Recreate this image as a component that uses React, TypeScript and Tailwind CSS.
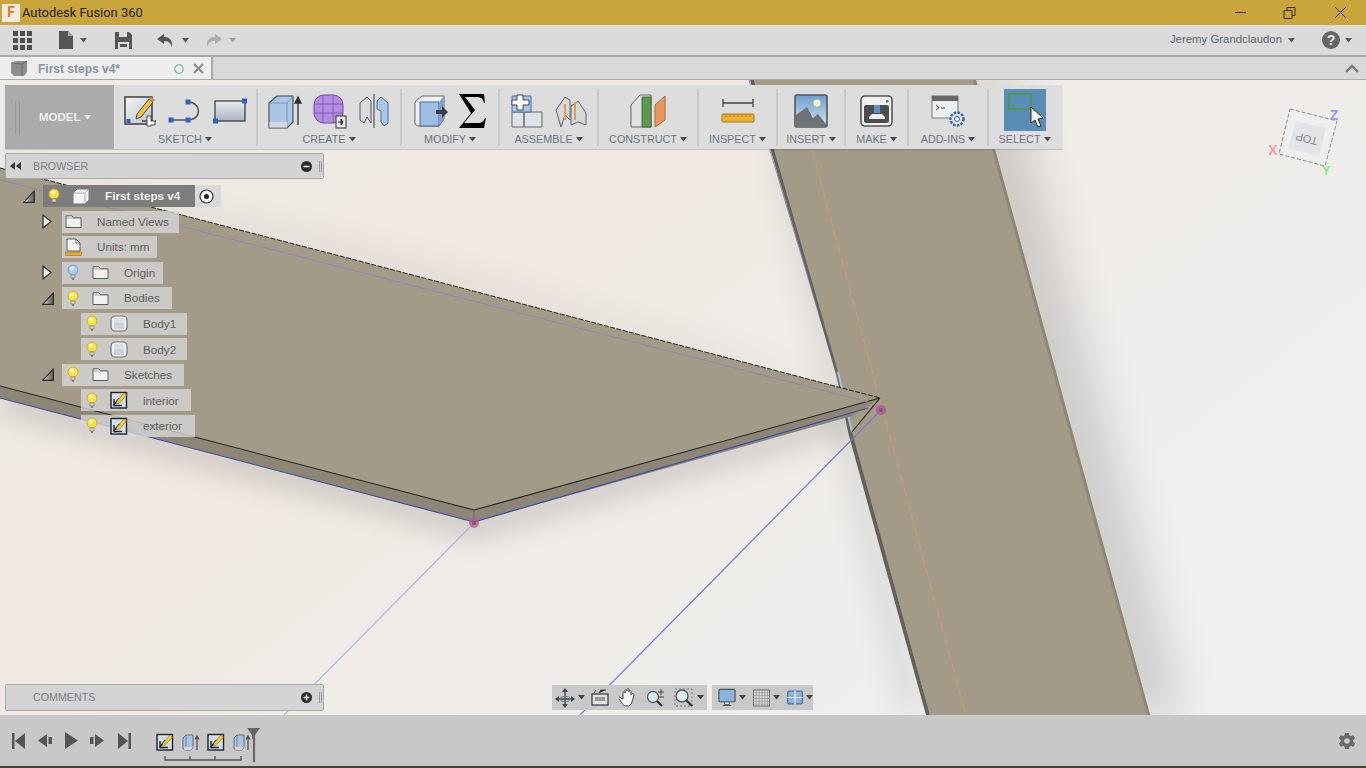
import React from 'react';
import { IoMdSettings } from 'react-icons/io';

const Caret = ({ color = '#555' }: { color?: string }) => (
  <svg width="7" height="5" viewBox="0 0 7 5" className="shrink-0"><path d="M0 0h7L3.5 4.5z" fill={color} /></svg>
);

const Bulb = ({ blue = false }: { blue?: boolean }) => (
  <svg width="12" height="17" viewBox="0 0 12 17">
    <circle cx="6" cy="6" r="5" fill={blue ? '#a9cdf2' : '#f6e24a'} stroke={blue ? '#6f9ccc' : '#cfae2f'} />
    <circle cx="5" cy="4.6" r="2" fill="#fff" opacity="0.65" />
    <path d="M4 11h4v3H4z" fill={blue ? '#cfdce8' : '#e6dfb5'} stroke="#777" strokeWidth="0.7" />
    <path d="M5 15h2" stroke="#666" strokeWidth="1.4" />
  </svg>
);

const Folder = () => (
  <svg width="17" height="15" viewBox="0 0 17 15">
    <path d="M1 13.5V1.8h6l1.4 2H16v9.7z" fill="#f2f2f2" stroke="#5c5c5c" strokeWidth="1" strokeLinejoin="round" />
    <path d="M1 4h15" stroke="#8a8a8a" strokeWidth="0.7" />
  </svg>
);

const BodyIcon = () => (
  <svg width="18" height="17" viewBox="0 0 18 17">
    <rect x="1" y="1" width="16" height="15" rx="4" fill="#f0f0f0" stroke="#6f7277" strokeWidth="1.2" />
    <rect x="4" y="3" width="10" height="11" rx="1" fill="#dcdfe2" />
    <path d="M4 8h10v6H4z" fill="#c7cacd" opacity="0.7" />
  </svg>
);

const SketchIcon = () => (
  <svg width="18" height="18" viewBox="0 0 18 18">
    <rect x="1" y="1.5" width="15.5" height="15.5" fill="#cfe0ef" stroke="#222" strokeWidth="1.4" />
    <path d="M4 14.5V8M4 14.5h8" stroke="#222" strokeWidth="1.4" />
    <path d="M4.5 14l-.8 0L9.5 7" stroke="#222" strokeWidth="1.2" />
    <path d="M7 10l7-8 2.5 2-7 8-3 1z" fill="#f5c92f" stroke="#7a5a10" strokeWidth="0.5" />
    <path d="M3 15.5h4v1H3z" fill="#4f8fd0" />
  </svg>
);

const MiniExtrude = () => (
  <svg width="18" height="18" viewBox="0 0 18 18">
    <path d="M1 5l3-3h7v12l-2 3H2.5L1 15.5z" fill="#a9c4e4" stroke="#5f6670" strokeWidth="0.9" />
    <path d="M4 2v12h7M4 14l-3 1.5" stroke="#5f6670" strokeWidth="0.7" fill="none" />
    <path d="M1.5 14l2.5-.5h7L9 17H2.5z" fill="#d5d8dc" />
    <path d="M15 17V4M13 6.5L15 3l2 3.5" stroke="#4d4d4d" strokeWidth="1.2" fill="none" />
  </svg>
);

const CubeTiny = () => (
  <svg width="18" height="17" viewBox="0 0 18 17">
    <path d="M1 5l4-4h12v11l-4 4H1z" fill="#f4f4f4" stroke="#777" strokeWidth="1" strokeLinejoin="round" />
    <path d="M1 5h12v11M13 5l4-4" stroke="#999" strokeWidth="0.8" fill="none" />
  </svg>
);

const UnitsIcon = () => (
  <svg width="17" height="18" viewBox="0 0 17 18">
    <path d="M2 13V1h9l4 4v8z" fill="#f3f3f3" stroke="#5e5e5e" />
    <path d="M11 1v4h4" fill="none" stroke="#5e5e5e" />
    <rect x="0.5" y="14" width="16" height="3.4" fill="#e9a92b" stroke="#9a6e12" strokeWidth="0.6" />
  </svg>
);

const Tri = () => (
  <svg width="12" height="13" viewBox="0 0 12 13">
    <defs><linearGradient id="tg" x1="1" y1="0" x2="0" y2="0"><stop offset="0" stopColor="#555" /><stop offset="1" stopColor="#ddd" /></linearGradient></defs>
    <path d="M11.4.8v11.6H.6z" fill="url(#tg)" stroke="#2c2c2c" strokeWidth="1.1" strokeLinejoin="round" />
  </svg>
);

const Play = () => (
  <svg width="10" height="15" viewBox="0 0 10 15">
    <path d="M1 1l8 6.5L1 14z" fill="#eeeeee" stroke="#333" strokeWidth="1.3" strokeLinejoin="round" />
  </svg>
);

type RowProps = {
  offset: string;
  pill: string;
  arrow?: 'open' | 'closed';
  bulb?: boolean;
  blue?: boolean;
  icon: React.ReactNode;
  label: string;
};

const Row = ({ offset, pill, arrow, bulb, blue, icon, label }: RowProps) => (
  <div className={`flex h-[22px] items-center ${offset}`}>
    <div className="flex w-[22px] shrink-0 pl-[2px]">
      {arrow === 'open' && <Tri />}
      {arrow === 'closed' && <Play />}
    </div>
    <div className={`flex h-[22px] items-center bg-[#d6d6d6]/80 text-[11.7px] text-[#5d5d5d] ${pill}`}>
      {bulb && (
        <span className="ml-[5px] mr-[12px] flex w-[12px] justify-center">
          <Bulb blue={blue} />
        </span>
      )}
      <span className={`flex w-[18px] justify-center ${bulb ? 'mr-[15px]' : 'ml-[2px] mr-[15px]'}`}>{icon}</span>
      <span className="whitespace-nowrap">{label}</span>
    </div>
  </div>
);

const Group = ({ cls, label, children }: { cls: string; label: string; children: React.ReactNode }) => (
  <div className={`relative flex h-full shrink-0 flex-col items-center border-r-2 border-[#c9c9c9] ${cls}`}>
    <div className="flex h-[45px] items-center justify-center gap-[11px]">{children}</div>
    <div className="flex items-center gap-[3px] text-[10.8px] leading-[14px] text-[#6c7480]">
      {label}
      <Caret color="#4d4d4d" />
    </div>
  </div>
);

const Scene = () => (
  <svg className="absolute inset-0 h-full w-full" viewBox="0 80 1366 635" preserveAspectRatio="none">
    <defs>
      <linearGradient id="bg" x1="0" y1="0" x2="1" y2="0.6">
        <stop offset="0" stopColor="#efebe6" />
        <stop offset="0.4" stopColor="#f0e9e2" />
        <stop offset="0.75" stopColor="#efedea" />
        <stop offset="1" stopColor="#f0f0ef" />
      </linearGradient>
      <filter id="soft" x="-50%" y="-30%" width="200%" height="160%"><feGaussianBlur stdDeviation="24" /></filter>
      <filter id="soft2" x="-30%" y="-30%" width="160%" height="160%"><feGaussianBlur stdDeviation="14" /></filter>
    </defs>
    <rect x="0" y="80" width="1366" height="635" fill="url(#bg)" />
    <path d="M950 80L1125 715H1180L1005 80z" fill="#000" opacity="0.17" filter="url(#soft)" />
    <path d="M800 150L925 715H900L770 150z" fill="#000" opacity="0.08" filter="url(#soft2)" />
    <path d="M0 380L474 505 860 400 860 430 474 540 0 415z" fill="#000" opacity="0.13" filter="url(#soft2)" />
    <path d="M0 175L340 260 860 395 700 335 340 235 0 155z" fill="#000" opacity="0.05" filter="url(#soft2)" />

    <path d="M754 80H976L1150 715H930z" fill="#a39b87" />
    <path d="M754 80L838 372 852 432 930 715H926L848 432 836 372 750 80z" fill="#64615b" />
    <path d="M976 80L1150 715H1147L973 80z" fill="#8e8776" />
    <path d="M812 150L965 712" stroke="#d4976a" strokeWidth="1.1" strokeDasharray="9 5" />
    <path d="M749 80L836 372" stroke="#4550a0" strokeWidth="0.8" opacity="0.7" />

    <path d="M838 372L852 432" stroke="#a9c3e6" strokeWidth="2" />
    <path d="M474 523L284 715" stroke="#b3b8dc" strokeWidth="1.2" />
    <path d="M881 410L580 715" stroke="#7f78cc" strokeWidth="1.2" />

    <path d="M0 398V386L474 510 880 398 852 416 474 522z" fill="#8d8677" />
    <path d="M0 168L340 256 880 398 474 510 0 386z" fill="#a39b87" />
    <path d="M0 168L340 256 880 398" stroke="#26241f" strokeWidth="1" strokeDasharray="5 1.5" fill="none" />
    <path d="M0 386L474 510 880 398" stroke="#26241f" strokeWidth="1.1" fill="none" />
    <path d="M0 398L474 522 868 408" stroke="#3d4aa8" strokeWidth="1.1" fill="none" />
    <path d="M474 510V522" stroke="#6b675e" strokeWidth="1" />
    <path d="M0 180L340 267 868 402 881 410" stroke="#8f82b4" strokeWidth="1" fill="none" />
    <path d="M880 398L852 432" stroke="#1f1f1f" strokeWidth="1.1" />

    <circle cx="881" cy="410" r="5" fill="#b4558c" opacity="0.75" />
    <circle cx="881" cy="410" r="2" fill="#7f4f8c" />
    <circle cx="474" cy="523" r="5" fill="#b4558c" opacity="0.75" />
    <circle cx="474" cy="523" r="2" fill="#7f4f8c" />

    <path d="M1290 109L1337 121 1325 166 1279 154z" fill="#efefef" stroke="#8f8f8f" strokeWidth="1" strokeDasharray="4 2" />
    <path d="M1296 121L1326 128 1319 156 1288 149z" fill="#e3e4e7" />
    <text x="1307" y="138" transform="rotate(195 1307 138)" textAnchor="middle" dominantBaseline="middle" fontFamily="Liberation Sans" fontSize="11" fill="#8a8a8a">TOP</text>
    <text x="1334" y="120" textAnchor="middle" fontFamily="Liberation Sans" fontSize="14" fontWeight="bold" fill="#9296ff">Z</text>
    <text x="1273" y="155" textAnchor="middle" fontFamily="Liberation Sans" fontSize="14" fontWeight="bold" fill="#ff9a9a">X</text>
    <text x="1326" y="175" textAnchor="middle" fontFamily="Liberation Sans" fontSize="13" fontWeight="bold" fill="#7df07d">Y</text>
  </svg>
);

const QuickBar = () => (
  <div className="flex h-[32px] shrink-0 items-center border-b-2 border-[#a9a9a9] bg-[#dbdbdb]">
    <svg width="19" height="19" viewBox="0 0 19 19" className="ml-[13px]" fill="#4f4f4f">
      <path d="M0 0h5v5H0zM7 0h5v5H7zM14 0h5v5h-5zM0 7h5v5H0zM7 7h5v5H7zM14 7h5v5h-5zM0 14h5v5H0zM7 14h5v5H7zM14 14h5v5h-5z" />
    </svg>
    <svg width="15" height="18" viewBox="0 0 15 18" className="ml-[27px]">
      <path d="M0 0h9l5 5v13H0z" fill="#555" />
      <path d="M9 0l5 5H9z" fill="#aaa" />
    </svg>
    <span className="ml-[6px]"><Caret /></span>
    <svg width="17" height="17" viewBox="0 0 17 17" className="ml-[28px]">
      <path d="M0 0h14l3 3v14H0z" fill="#555" />
      <path d="M4 0h8v5H4z" fill="#dcdcdc" />
      <path d="M3 10h11v7H3z" fill="#dcdcdc" />
      <path d="M5 12h7v3H5z" fill="#555" />
    </svg>
    <svg width="18" height="13" viewBox="0 0 18 13" className="ml-[25px]">
      <path d="M7 0L0 5l7 5V7c4 0 6 1 8 6 1-7-3-10-8-10z" fill="#555" />
    </svg>
    <span className="ml-[7px]"><Caret /></span>
    <svg width="18" height="13" viewBox="0 0 18 13" className="ml-[15px]">
      <path d="M11 0l7 5-7 5V7C7 7 5 8 3 13 2 6 6 3 11 3z" fill="#adadad" />
    </svg>
    <span className="ml-[7px]"><Caret color="#a0a0a0" /></span>
    <div className="ml-auto flex items-center text-[11.4px] text-[#5f6670]">
      <span>Jeremy Grandclaudon</span>
      <span className="ml-[6px]"><Caret /></span>
      <span className="ml-[27px] flex h-[18px] w-[18px] items-center justify-center rounded-full bg-[#666] text-[14px] font-bold text-[#e6e6e6]">?</span>
      <span className="ml-[5px] mr-[14px]"><Caret /></span>
    </div>
  </div>
);

const Toolbar = () => (
  <div className="absolute left-[5px] top-[5px] flex h-[64px] w-[1057px] bg-[#dddddd] pb-[3px] pt-[4px] shadow-[0_1px_1px_rgba(0,0,0,0.15)]">
    <div className="relative -mt-[4px] -mb-[3px] flex w-[109px] shrink-0 items-center bg-[#ababab] pl-[10px] pt-[2px]">
      <span className="h-[34px] w-[5px] border-x border-[#9a9a9a]" />
      <span className="ml-[19px] text-[11.5px] font-bold text-[#efefef]">MODEL</span>
      <span className="ml-[3px] -mt-[2px]"><Caret color="#efefef" /></span>
    </div>

    <Group cls="w-[144px]" label="SKETCH">
      <svg width="34" height="34" viewBox="0 0 34 34">
        <defs><linearGradient id="pg" x1="0" y1="0" x2="1" y2="1"><stop offset="0" stopColor="#f4f4f4" /><stop offset="1" stopColor="#b9c3d3" /></linearGradient></defs>
        <rect x="2" y="3" width="27" height="27" fill="url(#pg)" stroke="#333" strokeWidth="1.4" />
        <rect x="3.5" y="25" width="4" height="4" fill="#2f62c7" />
        <path d="M14 20L26 5l4 3-12 15-5 2z" fill="#f3c43a" stroke="#4d4d4d" strokeWidth="1" />
        <path d="M26 5l2-2 4 3-2 2z" fill="#d98a5d" />
        <path d="M22 29h5v-5h4v5h5-1v4h-4v1h-4v-5h-5z" fill="#fff" stroke="#444" strokeWidth="1" transform="translate(-3 -2)" />
      </svg>
      <svg width="34" height="34" viewBox="0 0 34 34">
        <path d="M3 26h17M20 26c14 0 14-18 0-18" fill="none" stroke="#555" strokeWidth="1.6" />
        <rect x="0.5" y="23.5" width="5" height="5" fill="#2f62c7" />
        <rect x="17.5" y="23.5" width="5" height="5" fill="#2f62c7" />
        <rect x="17.5" y="5.5" width="5" height="5" fill="#2f62c7" />
      </svg>
      <svg width="34" height="34" viewBox="0 0 34 34">
        <defs><linearGradient id="rg" x1="0" y1="0" x2="0" y2="1"><stop offset="0" stopColor="#eceef1" /><stop offset="1" stopColor="#aab3c2" /></linearGradient></defs>
        <rect x="2" y="7" width="30" height="20" fill="url(#rg)" stroke="#333" strokeWidth="1.2" />
        <rect x="0" y="24.5" width="5" height="5" fill="#2f62c7" />
        <rect x="29" y="4.5" width="5" height="5" fill="#2f62c7" />
      </svg>
    </Group>

    <Group cls="w-[144px]" label="CREATE">
      <svg width="34" height="36" viewBox="0 0 34 36">
        <path d="M1 10l8-7h16v26l-6 6H1z" fill="#a9c6e8" stroke="#444" strokeWidth="1.1" strokeLinejoin="round" />
        <path d="M1 10h18v25M19 10l6-7" fill="none" stroke="#7b8a9c" strokeWidth="0.8" />
        <path d="M1.5 29h17.5v5.500H1.500z" fill="#d5d8dc" />
        <path d="M30 32V6M27 10l3-6 3 6z" stroke="#333" strokeWidth="1.3" fill="#333" />
      </svg>
      <svg width="34" height="36" viewBox="0 0 34 36">
        <rect x="1" y="2" width="29" height="28" rx="10" fill="#b58be0" stroke="#6d4aa0" />
        <path d="M1 11h29M1 20h29M10 2v28M20 2v28" stroke="#7d55b4" strokeWidth="0.9" />
        <rect x="23" y="23" width="10" height="12" fill="#e8e8e8" stroke="#333" />
        <path d="M25 29h4M28 26l2 3-2 3z" stroke="#333" fill="#333" strokeWidth="1" />
      </svg>
      <svg width="32" height="34" viewBox="0 0 32 34">
        <path d="M2 9l7-6 4 4v22l-4-6-3 6-4-3z" fill="#d9dce0" stroke="#555" />
        <path d="M30 9l-7-6-4 4v8l4 2v11l3 4 4-3z" fill="#a9c6e8" stroke="#4b6c94" />
        <path d="M16 0v34" stroke="#555" strokeWidth="1.2" />
      </svg>
    </Group>

    <Group cls="w-[98px]" label="MODIFY">
      <svg width="34" height="34" viewBox="0 0 34 34">
        <path d="M1 8l7-6h22v23l-5 7H4L1 30z" fill="#f0f1f2" stroke="#666" />
        <path d="M6 8h19v24H6z" fill="#9dbde3" stroke="#4b6c94" />
        <path d="M25 8l5-6v23l-5 7z" fill="#7fa3cf" />
        <path d="M22 16h6v-4l6 6-6 6v-4h-6z" fill="#3d3d3d" />
      </svg>
      <svg width="27" height="34" viewBox="0 0 27 34">
        <path d="M0 0h25l1 9h-1c-1-4-3-6-7-6H6l10 13L5 29h14c4 0 6-2 7-5h1l-2 10H0l12-15z" fill="#000" />
      </svg>
    </Group>

    <Group cls="w-[99px]" label="ASSEMBLE">
      <svg width="34" height="34" viewBox="0 0 34 34">
        <path d="M2 18h12v15H2zM14 18h18v15H14z" fill="#dfe2e6" stroke="#666" />
        <path d="M2 2h19v16H2z" fill="#a9c6e8" stroke="#4b6c94" />
        <path d="M6 0h6v5h6v5h-6v5H6v-5H1V5h5z" fill="#fff" stroke="#444" transform="translate(1 1)" />
      </svg>
      <svg width="32" height="34" viewBox="0 0 32 34">
        <path d="M1 16L10 3l5 3v20l-5-5-4 12z" fill="#d5d8dc" stroke="#666" />
        <path d="M16 12l7-5 8 12v12l-8-3-7 3z" fill="#d5d8dc" stroke="#666" />
        <path d="M10 10v16M20 8v18" stroke="#e89a4a" strokeWidth="2" />
      </svg>
    </Group>

    <Group cls="w-[100px]" label="CONSTRUCT">
      <svg width="36" height="34" viewBox="0 0 36 34">
        <path d="M1 11L10 1h11v32H1z" fill="#dfe2e6" stroke="#666" />
        <path d="M12 3h9v30h-9z" fill="#5c9a4f" stroke="#3f6f36" />
        <path d="M25 11l10-9v24l-10 7z" fill="#e8985c" stroke="#a86a3a" />
      </svg>
    </Group>

    <Group cls="w-[79px]" label="INSPECT">
      <svg width="34" height="34" viewBox="0 0 34 34">
        <path d="M2 9h30M2 5v8M32 5v8" stroke="#444" strokeWidth="1.3" />
        <rect x="1" y="20" width="32" height="8" rx="1" fill="#eeb02f" stroke="#a87a18" />
        <path d="M5 20v3M9 20v3M13 20v3M17 20v3M21 20v3M25 20v3M29 20v3" stroke="#a87a18" />
      </svg>
    </Group>

    <Group cls="w-[68px]" label="INSERT">
      <svg width="34" height="34" viewBox="0 0 34 34">
        <defs><linearGradient id="sky" x1="0" y1="0" x2="0" y2="1"><stop offset="0" stopColor="#6d9ed0" /><stop offset="1" stopColor="#d4e4ef" /></linearGradient></defs>
        <rect x="1" y="1" width="32" height="32" rx="2" fill="url(#sky)" stroke="#555" strokeWidth="1.6" />
        <circle cx="23" cy="9" r="3.5" fill="#fdf4b8" />
        <path d="M2 32V21l11-8 10 19zM15 32l5-9 4-3 8 10v2z" fill="#6e7377" />
      </svg>
    </Group>

    <Group cls="w-[63px]" label="MAKE">
      <svg width="33" height="32" viewBox="0 0 33 32">
        <rect x="1" y="1" width="31" height="30" rx="4" fill="#f0f0f0" stroke="#555" strokeWidth="1.6" />
        <rect x="4" y="10" width="25" height="18" rx="2" fill="#4a4d50" />
        <path d="M14 10h6v8h-6z" fill="#5a8fc9" />
        <path d="M9 22l3-3h10l3 3v2H9z" fill="#eee" />
        <rect x="26" y="5" width="2.500" height="2.500" fill="#2f9a3c" />
      </svg>
    </Group>

    <Group cls="w-[80px]" label="ADD-INS">
      <svg width="34" height="32" viewBox="0 0 34 32">
        <rect x="1" y="1" width="26" height="22" fill="#eceef0" stroke="#777" />
        <rect x="1" y="1" width="26" height="5" fill="#666" />
        <path d="M5 10l3 2.500-3 2.500M10 13h4" stroke="#444" fill="none" />
        <circle cx="26" cy="24" r="6.500" fill="#dce8f4" stroke="#3a66a6" strokeWidth="2.500" strokeDasharray="2.500 1.300" />
        <circle cx="26" cy="24" r="2.500" fill="#fff" stroke="#3a66a6" />
      </svg>
    </Group>

    <div className="flex h-full flex-1 flex-col items-center pr-[2px]">
      <div className="relative flex h-[42px] w-[42px] bg-[#5a8db8]">
        <svg width="42" height="42" viewBox="0 0 42 42">
          <rect x="5" y="5" width="22" height="15" fill="none" stroke="#4f9a2e" strokeWidth="1.6" />
          <path d="M27 18v16l4-3 3 7 3-1-3-7 5-1z" fill="#fff" stroke="#222" strokeWidth="1" />
        </svg>
      </div>
      <div className="mt-[1px] flex items-center gap-[3px] text-[10.8px] leading-[14px] text-[#6c7480]">
        SELECT
        <Caret color="#4d4d4d" />
      </div>
    </div>
  </div>
);

const PanelEnd = ({ plus }: { plus?: boolean }) => (
  <span className="ml-auto mr-[1px] flex items-center gap-[7px]">
    <svg width="11" height="11" viewBox="0 0 11 11">
      <circle cx="5.500" cy="5.500" r="5.500" fill="#2b2b2b" />
      <path d={plus ? 'M2.500 5.500h6M5.500 2.500v6' : 'M2.500 5.500h6'} stroke="#eee" strokeWidth="1.600" />
    </svg>
    <span className="h-[11px] w-[3px] border-x border-[#9a9a9a]" />
  </span>
);

const Panel = ({ cls, title, plus, children }: { cls: string; title: string; plus?: boolean; children?: React.ReactNode }) => (
  <div className={`absolute left-[5px] flex w-[319px] items-center rounded-[2px] border border-[#a9a9a9] bg-[#d4d4d4] text-[10.7px] text-[#7d7d85] ${cls}`}>
    <span className="ml-[4px] mr-[12px] flex w-[11px] justify-center">{children}</span>
    <span>{title}</span>
    <PanelEnd plus={plus} />
  </div>
);

const NavTools = () => (
  <div className="absolute bottom-[5px] left-[552px] flex h-[25px] gap-[5px]">
    <div className="flex w-[155px] items-center bg-[#c9c9c9] pl-[3px]">
      <svg width="20" height="20" viewBox="0 0 20 20">
        <path d="M10 1v18M1 11h17" stroke="#444" strokeWidth="1.300" />
        <path d="M10 0l-3 4h6zM10 20l-3-4h6zM0 11l4-3v6zM20 11l-4-3v6z" fill="#444" />
        <ellipse cx="10" cy="11" rx="5" ry="2.500" fill="none" stroke="#5a7fa8" />
      </svg>
      <span className="ml-[3px]"><Caret color="#444" /></span>
      <svg width="18" height="17" viewBox="0 0 18 17" className="ml-[6px]">
        <rect x="1" y="5" width="16" height="11" fill="#e2e2e2" stroke="#444" strokeWidth="1.300" />
        <rect x="4" y="8" width="10" height="4" fill="#999" />
        <path d="M3 4l2-3M8 4l2-3h5" stroke="#444" />
      </svg>
      <svg width="18" height="19" viewBox="0 0 18 19" className="ml-[10px]">
        <path d="M4 11V5c0-2 2-2 2 0V3c0-2 2-2 2 0v-1c0-2 2-2 2 0v2c0-2 2-2 2 0v3c1-2 3-2 3 0l-2 7c-1 3-2 4-5 4-3 0-4-1-5-3l-3-4c-1-2 1-3 2-1z" fill="#f4f4f4" stroke="#444" />
      </svg>
      <svg width="19" height="18" viewBox="0 0 19 18" className="ml-[9px]">
        <circle cx="7" cy="8" r="5.500" fill="#dcebf4" stroke="#555" strokeWidth="1.300" />
        <path d="M11 12l5 5" stroke="#333" strokeWidth="2.200" />
        <path d="M12 3h6M15 0v6M12 8h6" stroke="#444" />
      </svg>
      <svg width="20" height="20" viewBox="0 0 20 20" className="ml-[9px]">
        <rect x="1" y="1" width="17" height="17" fill="none" stroke="#777" strokeDasharray="2 2" />
        <circle cx="8" cy="8" r="6" fill="#dcebf4" stroke="#555" strokeWidth="1.300" />
        <path d="M12 12l6 6" stroke="#333" strokeWidth="2.200" />
      </svg>
      <span className="ml-[3px]"><Caret color="#444" /></span>
    </div>
    <div className="flex w-[101px] items-center bg-[#c9c9c9] pl-[6px]">
      <svg width="19" height="19" viewBox="0 0 19 19">
        <rect x="1" y="1" width="17" height="13" rx="1" fill="#8db4dc" stroke="#555" strokeWidth="1.300" />
        <path d="M7 14h5v3H7zM5 18h9" stroke="#555" fill="#ddd" />
      </svg>
      <span className="ml-[3px]"><Caret color="#444" /></span>
      <svg width="18" height="18" viewBox="0 0 18 18" className="ml-[7px]">
        <rect x="0.500" y="0.500" width="17" height="17" fill="#e2e2e2" stroke="#666" />
        <path d="M3.500 0v18M6.500 0v18M9.500 0v18M12.500 0v18M15.500 0v18M0 3.500h18M0 6.500h18M0 9.500h18M0 12.500h18M0 15.500h18" stroke="#888" strokeWidth="0.700" />
      </svg>
      <span className="ml-[3px]"><Caret color="#444" /></span>
      <svg width="17" height="15" viewBox="0 0 17 15" className="ml-[7px]">
        <rect x="0.700" y="0.700" width="15.600" height="13.600" rx="1.500" fill="#8db4dc" stroke="#4a6f9c" strokeWidth="1.300" />
        <path d="M8.500 0v15M0 7.500h17" stroke="#e8eef4" strokeWidth="1.300" />
      </svg>
      <span className="ml-[3px]"><Caret color="#444" /></span>
    </div>
  </div>
);

const Timeline = () => (
  <div className="flex h-[53px] shrink-0 items-center border-b-2 border-[#4a452f] bg-[#c8c8c8]">
    <svg width="13" height="16" viewBox="0 0 13 16" className="ml-[12px]" fill="#555"><path d="M0 0h2.500v16H0zM13 0v16L3 8z" /></svg>
    <svg width="14" height="13" viewBox="0 0 14 13" className="ml-[13px]" fill="#555"><path d="M9 0v13L0 6.500zM10.500 3H14v7h-3.500z" /></svg>
    <svg width="13" height="17" viewBox="0 0 13 17" className="ml-[13px]" fill="#555"><path d="M0 0l13 8.500L0 17z" /></svg>
    <svg width="14" height="13" viewBox="0 0 14 13" className="ml-[12px]" fill="#555"><path d="M5 0v13l9-6.500zM3.500 3H0v7h3.500z" /></svg>
    <svg width="13" height="16" viewBox="0 0 13 16" className="ml-[14px]" fill="#555"><path d="M13 0h-2.500v16H13zM0 0v16l10-8z" /></svg>
    <div className="relative ml-[25px] h-[38px] w-[110px]">
      <div className="flex items-center gap-[7.5px] pt-[11px]">
        <SketchIcon />
        <MiniExtrude />
        <SketchIcon />
        <MiniExtrude />
      </div>
      <svg className="absolute left-0 top-0" width="110" height="42" viewBox="0 0 110 42">
        <path d="M9 34v4h76v-4M34 34v4M59 34v4" fill="none" stroke="#555" strokeWidth="1.400" />
        <path d="M91 6h13l-5 7v4h-3V13z" fill="#666" />
        <path d="M98 12v28" stroke="#666" strokeWidth="2.200" />
      </svg>
    </div>
    <IoMdSettings size={20} color="#6a6a6a" className="ml-auto mr-[9px]" />
  </div>
);

export default function App() {
  return (
    <div className="flex h-[768px] w-[1366px] flex-col overflow-hidden bg-[#efece7] font-['Liberation_Sans',sans-serif]">
      <div className="flex h-[25px] shrink-0 items-center bg-[#c9a53b] font-['Roboto',sans-serif] text-[12.9px] text-[#222]">
        <span className="ml-[2px] flex h-[18px] w-[18px] items-center justify-center bg-[#f4ece0] text-[14px] font-bold text-[#e0762a]">F</span>
        <span className="ml-[2px]">Autodesk Fusion 360</span>
        <svg width="112" height="14" viewBox="0 0 112 14" className="ml-auto mr-[19px]" fill="none" stroke="#333" strokeWidth="1">
          <path d="M0 6.500h11" />
          <path d="M49 4.500h8v8h-8zM52 4.500v-3h8v8h-3" />
          <path d="M100 1l11 11M111 1l-11 11" />
        </svg>
      </div>

      <QuickBar />

      <div className="flex h-[23px] shrink-0 border-b border-[#a9a9a9] bg-[#d9d9d9]">
        <div className="flex w-[213px] items-center border-r-2 border-[#a9a9a9] bg-[#eeeeee] pl-[11px] pt-[1px] text-[12px] font-bold text-[#8a929c]">
          <svg width="16" height="15" viewBox="0 0 16 15">
            <path d="M0 2l5-2h11v11l-3 4H3L0 12z" fill="#8d8d8d" />
            <path d="M0 2l11 1 5-3-5 3v12" stroke="#666" fill="none" strokeWidth="0.800" />
          </svg>
          <span className="ml-[11px]">First steps v4*</span>
          <svg width="12" height="12" viewBox="0 0 12 12" className="ml-[53px]"><circle cx="6" cy="6" r="4.200" fill="none" stroke="#7cc8b4" strokeWidth="1.400" /></svg>
          <svg width="11" height="11" viewBox="0 0 11 11" className="ml-[8px]"><path d="M1 1l9 9M10 1l-9 9" stroke="#8a8a8a" strokeWidth="2.200" /></svg>
        </div>
        <svg width="14" height="9" viewBox="0 0 14 9" className="ml-auto mr-[7px] mt-[7px]"><path d="M1 8l6-6 6 6" fill="none" stroke="#777" strokeWidth="2.400" /></svg>
      </div>

      <div className="relative min-h-0 flex-1">
        <Scene />
        <Toolbar />

        <Panel cls="top-[73px] h-[26px]" title="BROWSER">
          <svg width="11" height="8" viewBox="0 0 11 8" fill="#333"><path d="M5 0v8L0 4zM11 0v8L6 4z" /></svg>
        </Panel>

        <div className="absolute left-0 top-[105px] flex flex-col gap-[3.55px]">
          <div className="relative">
            <Row offset="ml-[21px]" pill="w-[178px]" arrow="open" bulb icon={<CubeTiny />} label="" />
            <div className="absolute left-[43px] top-0 flex h-[22px] w-[152px] items-center bg-[#7d7d7d] text-[11.7px] font-bold text-[#f2f2f2]">
              <span className="ml-[5px] mr-[12px] flex w-[12px] justify-center"><Bulb /></span>
              <span className="mr-[15px] flex w-[18px] justify-center"><CubeTiny /></span>
              First steps v4
            </div>
            <svg width="15" height="15" viewBox="0 0 15 15" className="absolute left-[199px] top-[3.500px]">
              <circle cx="7.500" cy="7.500" r="6.500" fill="#f4f4f4" stroke="#333" strokeWidth="1.200" />
              <circle cx="7.500" cy="7.500" r="2.500" fill="#222" />
            </svg>
          </div>
          <Row offset="ml-[40px]" pill="w-[117px]" arrow="closed" icon={<Folder />} label="Named Views" />
          <Row offset="ml-[40px]" pill="w-[95px]" icon={<UnitsIcon />} label="Units: mm" />
          <Row offset="ml-[40px]" pill="w-[101px]" arrow="closed" bulb blue icon={<Folder />} label="Origin" />
          <Row offset="ml-[40px]" pill="w-[110px]" arrow="open" bulb icon={<Folder />} label="Bodies" />
          <Row offset="ml-[59px]" pill="w-[106px]" bulb icon={<BodyIcon />} label="Body1" />
          <Row offset="ml-[59px]" pill="w-[106px]" bulb icon={<BodyIcon />} label="Body2" />
          <Row offset="ml-[40px]" pill="w-[122px]" arrow="open" bulb icon={<Folder />} label="Sketches" />
          <Row offset="ml-[59px]" pill="w-[110px]" bulb icon={<SketchIcon />} label="interior" />
          <Row offset="ml-[59px]" pill="w-[114px]" bulb icon={<SketchIcon />} label="exterior" />
        </div>

        <Panel cls="bottom-[4px] h-[27px]" title="COMMENTS" plus />

        <NavTools />
      </div>

      <Timeline />
    </div>
  );
}
